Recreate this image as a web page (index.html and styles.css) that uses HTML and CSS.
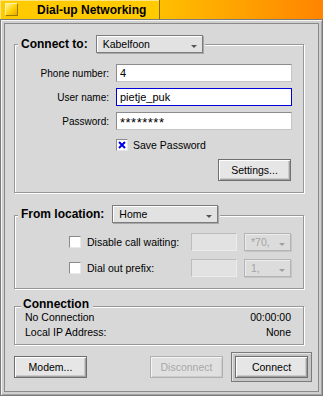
FILE: index.html
```html
<!DOCTYPE html>
<html lang="en">
<head>
    <meta charset="UTF-8">
    <title>Dial-up Networking</title>
    <link rel="stylesheet" href="styles.css">
</head>
<body>
    <div class="tabbar">
        <div class="tab">
            <span class="close-box"></span>
            <span class="title">Dial-up Networking</span>
        </div>
    </div>

    <div class="window">
        <div class="panel">

            <div class="group group-connect">
                <div class="group-head">
                    <span class="group-label">Connect to:</span>
                    <div class="menu menu-service">Kabelfoon<span class="arrow"></span></div>
                </div>
                <div class="form-grid">
                    <label for="phone">Phone number:</label>
                    <input class="field" type="text" id="phone" value="4">
                    <label for="user">User name:</label>
                    <input class="field focused" type="text" id="user" value="pietje_puk">
                    <label for="pass">Password:</label>
                    <input class="field stars" type="text" id="pass" value="********">
                </div>
                <div class="save-row">
                    <span class="check checked">
                        <svg width="8" height="8" viewBox="0 0 8 8"><path d="M1 1L7 7M7 1L1 7" stroke="#0000e8" stroke-width="2"/></svg>
                    </span>
                    <span>Save Password</span>
                </div>
                <div class="settings-row">
                    <button class="btn">Settings...</button>
                </div>
            </div>

            <div class="group group-location">
                <div class="group-head">
                    <span class="group-label">From location:</span>
                    <div class="menu menu-location">Home<span class="arrow"></span></div>
                </div>
                <div class="loc-row">
                    <span class="check"></span>
                    <span class="loc-label">Disable call waiting:</span>
                    <input class="field disabled" type="text" disabled>
                    <div class="menu menu-small disabled">*70,<span class="arrow"></span></div>
                </div>
                <div class="loc-row">
                    <span class="check"></span>
                    <span class="loc-label">Dial out prefix:</span>
                    <input class="field disabled" type="text" disabled>
                    <div class="menu menu-small disabled">1,<span class="arrow"></span></div>
                </div>
            </div>

            <div class="group group-status">
                <div class="group-head">
                    <span class="group-label">Connection</span>
                </div>
                <div class="status-row"><span>No Connection</span><span>00:00:00</span></div>
                <div class="status-row"><span>Local IP Address:</span><span>None</span></div>
            </div>

            <div class="button-row">
                <button class="btn">Modem...</button>
                <button class="btn btn-disabled" disabled>Disconnect</button>
                <div class="default-frame">
                    <button class="btn">Connect</button>
                </div>
            </div>

        </div>
    </div>
</body>
</html>
```

FILE: styles.css
```css
body {
    margin: 0;
    width: 323px;
    height: 396px;
    overflow: hidden;
    font-family: "Liberation Sans", Arial, sans-serif;
    font-size: 10px;
    color: #000;
    background: linear-gradient(to right, #ffc400 45%, #ff8400 100%);
}

/* title tab */

.tabbar {
    height: 19px;
}

.tab {
    width: 160px;
    height: 19px;
    box-sizing: border-box;
    display: flex;
    align-items: center;
    background: #ffcb00;
    border-right: 1px solid #8a6a00;
    box-shadow: inset 1px 1px 0 #ffe680;
}

.close-box {
    width: 13px;
    height: 13px;
    box-sizing: border-box;
    margin-left: 5px;
    border: 1px solid;
    border-color: #fff2a8 #9c7a00 #9c7a00 #fff2a8;
    background: linear-gradient(135deg, #fff4a0 0%, #ffd000 55%, #e8a800 100%);
}

.title {
    margin-left: 19px;
    font-size: 12px;
    font-weight: bold;
}

/* window frame */

.window {
    height: 377px;
    box-sizing: border-box;
    border: 1px solid #7a7a7a;
    padding: 3px;
    background: #cfcfcf;
    box-shadow: inset 1px 1px 0 #f4f4f4, inset -1px -1px 0 #a4a4a4;
}

.panel {
    height: 100%;
    box-sizing: border-box;
    border: 1px solid #8a8a8a;
    background: #d8d8d8;
    padding: 0 7px 0 9px;
    display: flex;
    flex-direction: column;
}

/* group boxes */

.group {
    border: 1px solid #989898;
    box-shadow: 1px 1px 0 #fff, inset 1px 1px 0 #fff;
    width: 290px;
    box-sizing: border-box;
}

.group-head {
    display: flex;
    align-items: center;
    gap: 8px;
    width: fit-content;
    margin-left: 3px;
    padding: 0 2px 0 3px;
    background: #d8d8d8;
}

.group-label {
    font-size: 12px;
    font-weight: bold;
    line-height: 14px;
}

.group-connect {
    margin-top: 20px;
    padding-bottom: 11px;
}

.group-connect .group-head {
    margin-top: -10px;
    height: 18px;
}

.form-grid {
    display: grid;
    grid-template-columns: 94px 176px;
    column-gap: 7px;
    row-gap: 6px;
    align-items: center;
    margin-top: 11px;
}

.form-grid label {
    text-align: right;
}

.field {
    height: 18px;
    box-sizing: border-box;
    margin: 0;
    padding: 0 3px;
    border: 1px solid;
    border-color: #8c8c8c #c4c4c4 #c4c4c4 #8c8c8c;
    background: #fff;
    font-family: "Liberation Sans", Arial, sans-serif;
    font-size: 11px;
    color: #000;
    outline: none;
}

.field.focused {
    border-color: #0000dc;
}

.field.stars {
    font-size: 13px;
    letter-spacing: 0.5px;
    padding-top: 3px;
}

.field.disabled {
    width: 46px;
    background: #e2e2e2;
    border-color: #bcbcbc #ececec #ececec #bcbcbc;
}

.save-row {
    display: flex;
    align-items: center;
    gap: 5px;
    margin: 9px 0 0 101px;
    font-size: 10.5px;
    height: 12px;
}

.check {
    width: 12px;
    height: 12px;
    box-sizing: border-box;
    display: flex;
    align-items: center;
    justify-content: center;
    border: 1px solid;
    border-color: #8a8a8a #e8e8e8 #e8e8e8 #8a8a8a;
    background: #fff;
}

.settings-row {
    display: flex;
    justify-content: flex-end;
    margin: 8px 12px 0 0;
}

/* menus */

.menu {
    height: 18px;
    box-sizing: border-box;
    display: flex;
    align-items: center;
    padding: 0 5px 0 6px;
    border: 1px solid #7c7c7c;
    background: #e2e2e2;
    box-shadow: inset 1px 1px 0 #fff, 1px 1px 0 #a8a8a8;
    font-size: 10.5px;
}

.menu .arrow {
    margin-left: auto;
    margin-top: 4px;
    border-left: 3px solid transparent;
    border-right: 3px solid transparent;
    border-top: 3px solid #555;
}

.menu-service {
    width: 107px;
}

.menu-location {
    width: 106px;
}

.menu-small {
    width: 47px;
}

.menu.disabled {
    color: #a4a4a4;
    border-color: #b4b4b4;
    background: #dcdcdc;
    box-shadow: inset 1px 1px 0 #ececec, 1px 1px 0 #c4c4c4;
}

.menu.disabled .arrow {
    border-top-color: #a0a0a0;
}

/* location group */

.group-location {
    margin-top: 22px;
    padding-bottom: 11px;
}

.group-location .group-head {
    margin-top: -11px;
    height: 18px;
}

.loc-row {
    display: flex;
    align-items: center;
    height: 18px;
    margin: 8px 12px 0 54px;
}

.group-location .group-head + .loc-row {
    margin-top: 10px;
}

.loc-label {
    flex: 1;
    margin-left: 6px;
    font-size: 10.5px;
}

.loc-row .menu {
    margin-left: 7px;
}

/* connection status */

.group-status {
    margin-top: 17px;
    padding: 0 12px 4px 10px;
}

.group-status .group-head {
    margin: -10px 0 0 -4px;
    padding: 0 4px 0 2px;
}

.status-row {
    display: flex;
    justify-content: space-between;
    line-height: 15px;
    font-size: 10.5px;
}

.group-head + .status-row {
    margin-top: -1px;
}

/* buttons */

.btn {
    width: 73px;
    height: 22px;
    box-sizing: border-box;
    margin: 0;
    padding: 0;
    border: 1px solid #6e6e6e;
    background: #e6e6e6;
    box-shadow: inset 1px 1px 0 #fff, inset -1px -1px 0 #a0a0a0, inset -2px -2px 0 #cacaca;
    font-family: "Liberation Sans", Arial, sans-serif;
    font-size: 10.5px;
    color: #000;
}

.btn-disabled {
    color: #a8a8a8;
    border-color: #b0b0b0;
    background: #e0e0e0;
    box-shadow: inset 1px 1px 0 #f4f4f4, inset -1px -1px 0 #cccccc;
}

.button-row {
    display: flex;
    align-items: center;
    margin-top: 7px;
    margin-right: -1px;
}

.button-row .btn-disabled {
    margin-left: auto;
}

.default-frame {
    margin-left: 8px;
    padding: 3px;
    border: 1px solid #7a7a7a;
    background: #c6c6c6;
    box-shadow: inset 1px 1px 0 #e6e6e6;
    display: flex;
}
```
